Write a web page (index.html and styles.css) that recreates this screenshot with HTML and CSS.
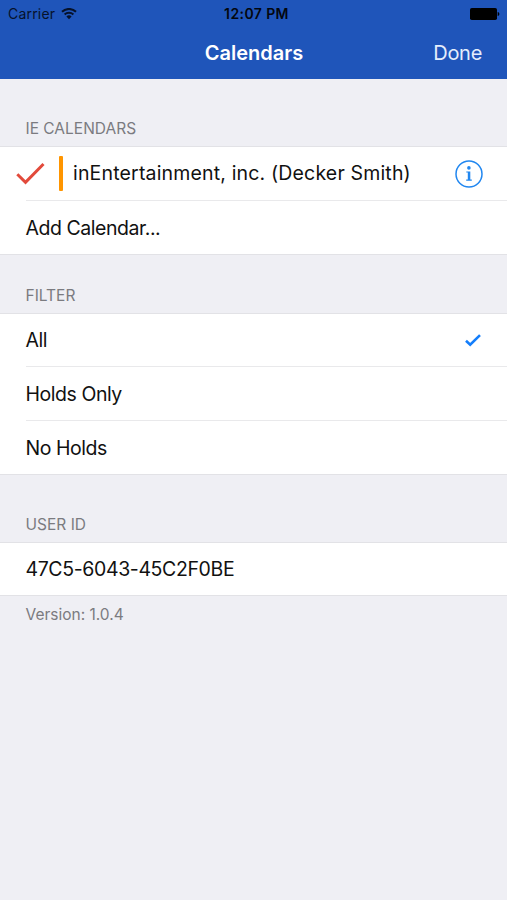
FILE: index.html
```html
<!DOCTYPE html>
<html lang="en">
<head>
    <meta charset="UTF-8">
    <meta name="viewport" content="width=device-width, initial-scale=1.0">
    <title>Calendars</title>
    <link rel="stylesheet" href="styles.css">
</head>
<body>
    <header class="header">
        <div class="status-bar">
            <div class="carrier">
                <span class="carrier-name">Carrier</span>
                <svg class="wifi" width="16" height="12" viewBox="0 0 16 12" fill="none" stroke="#06122b" stroke-width="2">
                    <path d="M1 3.8a10 10 0 0 1 14 0"/>
                    <path d="M3.6 6.5a6.4 6.4 0 0 1 8.8 0"/>
                    <path d="M8 11.2L5.4 8.5a3.7 3.7 0 0 1 5.2 0z" fill="#06122b" stroke="none"/>
                </svg>
            </div>
            <span class="time">12:07 PM</span>
            <svg class="battery" width="31" height="12" viewBox="0 0 31 12">
                <rect x="1" y="0" width="27" height="12" rx="1.8"/>
                <path d="M28.7 4c2.2.4 2.2 3.6 0 4z"/>
            </svg>
        </div>
        <div class="navbar">
            <h1 class="title">Calendars</h1>
            <a class="done" href="#">Done</a>
        </div>
    </header>

    <main>
        <section class="group">
            <h2 class="group-title">IE CALENDARS</h2>
            <ul class="list">
                <li class="row calendar">
                    <svg class="selected" width="30" height="24" viewBox="0 0 30 24" fill="none" stroke="#e24a3b" stroke-width="3">
                        <path d="M1.3 12.3l8.2 8L27.5 2"/>
                    </svg>
                    <span class="color-bar"></span>
                    <span class="calendar-name">inEntertainment, inc. (Decker Smith)</span>
                    <svg class="info" width="28" height="28" viewBox="0 0 28 28">
                        <circle cx="14" cy="14" r="13" fill="none" stroke="#2187f0" stroke-width="1.5"/>
                        <circle cx="13.9" cy="7.9" r="1.8" fill="#2187f0"/>
                        <path d="M11.3 11.4h4v8.2h1.5v1.2h-5.6v-1.2h1.6v-7h-1.5z" fill="#2187f0"/>
                    </svg>
                </li>
                <li class="row"><span>Add Calendar...</span></li>
            </ul>
        </section>

        <section class="group group-filter">
            <h2 class="group-title">FILTER</h2>
            <ul class="list">
                <li class="row">
                    <span>All</span>
                    <svg class="check" width="16" height="13" viewBox="0 0 16 13" fill="none" stroke="#147efb" stroke-width="2.6">
                        <path d="M1 6.7l4.2 4L15 1.1"/>
                    </svg>
                </li>
                <li class="row"><span>Holds Only</span></li>
                <li class="row"><span>No Holds</span></li>
            </ul>
        </section>

        <section class="group group-user">
            <h2 class="group-title">USER ID</h2>
            <ul class="list">
                <li class="row"><span class="user-id">47C5-6043-45C2F0BE</span></li>
            </ul>
            <p class="version">Version: 1.0.4</p>
        </section>
    </main>
</body>
</html>
```
FILE: styles.css
```css
* {
    box-sizing: border-box;
}

body {
    margin: 0;
    min-height: 100vh;
    background-color: #efeff4;
    color: #111;
    font-family: Inter, "Liberation Sans", sans-serif;
    font-size: 19.5px;
    letter-spacing: -0.45px;
}

/* Header */
.header {
    height: 79px;
    background-color: #1f55ba;
}

.status-bar {
    display: grid;
    grid-template-columns: 1fr auto 1fr;
    align-items: center;
    height: 27px;
    padding: 0 7px 0 8px;
    color: #06122b;
    font-size: 14px;
    letter-spacing: 0;
}

.carrier {
    display: flex;
    align-items: center;
    gap: 6px;
}

.carrier-name {
    letter-spacing: 0.2px;
}

.time {
    margin-left: 5px;
    color: #03070f;
    font-weight: 600;
    letter-spacing: 0.4px;
}

.battery {
    justify-self: end;
}

.navbar {
    display: grid;
    grid-template-columns: 1fr auto 1fr;
    align-items: center;
    height: 51px;
    padding: 0 25px;
    font-size: 20px;
    letter-spacing: -0.3px;
}

.title {
    grid-column: 2;
    margin: 0;
    padding-left: 1px;
    color: white;
    font-size: 20px;
    font-weight: 600;
    letter-spacing: 0;
}

.done {
    justify-self: end;
    color: #e4edfc;
    text-decoration: none;
}

/* Grouped lists */
.group-title {
    display: flex;
    align-items: flex-end;
    height: 67px;
    margin: 0;
    padding: 0 25.5px 7px;
    color: #7b7b80;
    font-size: 15.5px;
    font-weight: 400;
    letter-spacing: 0;
    line-height: 20px;
}

.group-filter .group-title {
    height: 58px;
}

.list {
    margin: 0;
    padding: 0;
    list-style: none;
    background-color: white;
    border-top: 1px solid #e2e2e6;
    border-bottom: 1px solid #e2e2e6;
}

.row {
    display: flex;
    align-items: center;
    justify-content: space-between;
    height: 54px;
    margin-left: 25.5px;
    padding-right: 26px;
}

.row:first-child {
    height: 52px;
}

.row + .row {
    border-top: 1px solid #e9e9eb;
}

.row.calendar {
    justify-content: flex-start;
    height: 53px;
    margin-left: 0;
    padding: 0 24px 0 16px;
}

.color-bar {
    width: 4px;
    height: 35px;
    margin: 0 10px 0 13px;
    border-radius: 1px;
    background-color: #ff9500;
}

.calendar-name {
    padding-bottom: 1px;
    letter-spacing: 0.17px;
}

.user-id {
    letter-spacing: -0.38px;
}

.info {
    margin-left: auto;
}

.version {
    margin: 0;
    padding: 9px 25.5px;
    color: #7b7b80;
    font-size: 15.5px;
    letter-spacing: 0;
    line-height: 20px;
}
```
